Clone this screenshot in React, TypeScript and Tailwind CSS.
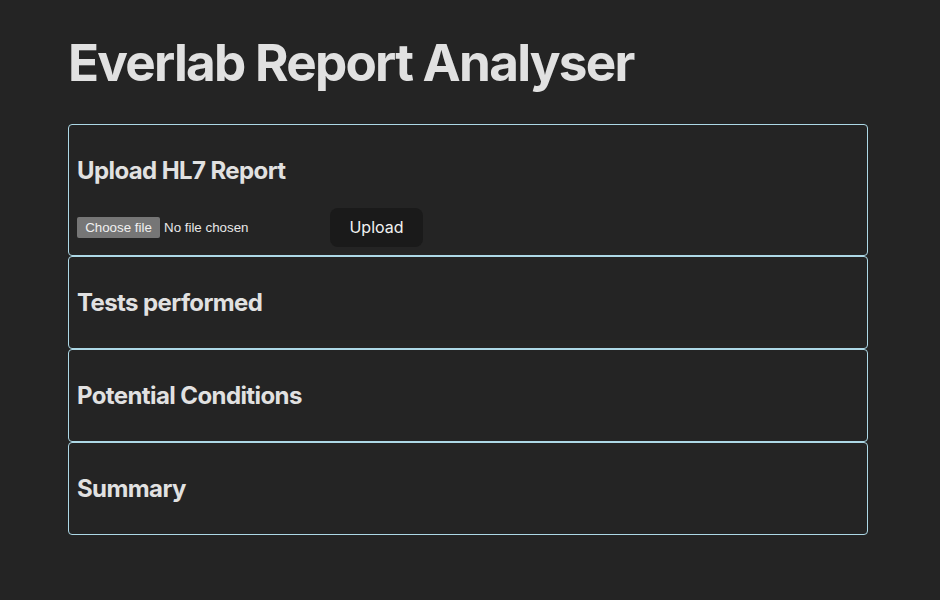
const sections = ['Tests performed', 'Potential Conditions', 'Summary']

function Card({ children }: { children: React.ReactNode }) {
  return <div className="rounded-[4px] border border-[#add8e6] p-2">{children}</div>
}

function Heading({ children }: { children: React.ReactNode }) {
  return (
    <h2 className="mt-[20px] mb-[19px] text-[24px] font-bold leading-[36px] tracking-[-0.6px]">
      {children}
    </h2>
  )
}

export default function App() {
  return (
    <main
      className="min-h-screen bg-[#242424] text-[#e1e1e1]"
      style={{ fontFamily: 'Inter, "Noto Sans", sans-serif' }}
    >
      <div className="ml-[68px] w-[800px]">
        <h1 className="m-0 pt-[34px] pb-[34px] text-[51.2px] font-bold leading-[56px] tracking-[-1.75px]">
          Everlab Report Analyser
        </h1>

        {/* Upload */}
        <Card>
          <Heading>Upload HL7 Report</Heading>
          <div className="flex items-center">
            <div
              className="flex w-[253px] items-center text-[13.33px]"
              style={{ fontFamily: '"Liberation Sans", Arial, sans-serif' }}
            >
              <span className="flex h-[21px] w-[83px] items-center justify-center rounded-[2px] bg-[#767676] text-[#f0f0f0]">
                Choose file
              </span>
              <span className="ml-[4px] text-[#e8e8e8]">No file chosen</span>
            </div>
            <button className="h-[39px] w-[93px] rounded-lg border border-transparent bg-[#1a1a1a] text-[16px] font-normal leading-[19.4px] text-[#f2f2f2]">
              Upload
            </button>
          </div>
        </Card>

        {sections.map((s) => (
          <Card key={s}>
            <Heading>{s}</Heading>
          </Card>
        ))}
      </div>
    </main>
  )
}
